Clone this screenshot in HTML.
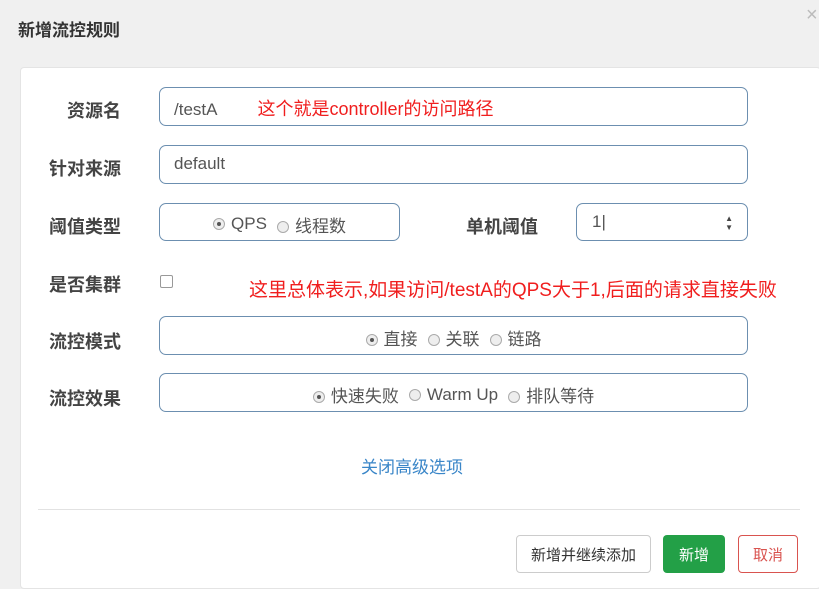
<!DOCTYPE html>
<html><head><meta charset="utf-8"><style>
body{margin:0;width:819px;height:580px;background:#f0f0f0;font-family:"Liberation Sans","Noto Sans CJK SC",sans-serif;position:relative;overflow:hidden}
.a{position:absolute}
.title{left:18px;top:16px;font-size:17px;font-weight:bold;color:#333}
.x{left:806px;top:4px;font-size:20px;color:#bbb}
.panel{left:20px;top:67px;width:799px;height:520px;background:#fff;border-radius:4px;border:1px solid #e4e4e4}
.lb{font-size:18px;font-weight:bold;color:#444;text-align:right;width:115px;left:6px}
.in{border:1.5px solid #6c8fb0;border-radius:7px;background:#fff;box-sizing:border-box;font-size:17px;color:#555}
.red{color:#f01e1e;font-size:18px}
.r{display:inline-block;width:12px;height:12px;border-radius:50%;border:1px solid #aaa;background:#eee;vertical-align:-1px;margin-right:6px;box-sizing:border-box;position:relative}
.r.on::after{content:"";position:absolute;left:3px;top:3px;width:4px;height:4px;border-radius:50%;background:#555}
.grp{display:flex;align-items:center;justify-content:center;font-size:17px;color:#555;padding-top:4px}
.grp span{margin:0 5px}
.btn{border-radius:4px;font-size:15px;box-sizing:border-box;display:flex;align-items:center;justify-content:center}
</style></head><body>
<div class="a title">新增流控规则</div>
<div class="a x">×</div>
<div class="a panel"></div>

<div class="a lb" style="top:97px">资源名</div>
<div class="a in" style="left:159px;top:87px;width:589px;height:39px;padding:7px 0 0 14px">/testA<span class="red" style="margin-left:40px">这个就是controller的访问路径</span></div>

<div class="a lb" style="top:155px">针对来源</div>
<div class="a in" style="left:159px;top:145px;width:589px;height:39px;padding:8px 0 0 14px">default</div>

<div class="a lb" style="top:213px">阈值类型</div>
<div class="a in grp" style="left:159px;top:203px;width:241px;height:38px"><span><i class="r on"></i>QPS</span><span><i class="r"></i>线程数</span></div>
<div class="a lb" style="top:213px;left:423px">单机阈值</div>
<div class="a in" style="left:576px;top:203px;width:172px;height:38px;padding:8px 0 0 15px">1|<span class="a" style="right:14px;top:10px;font-size:8px;line-height:9px;color:#444">▲<br>▼</span></div>

<div class="a lb" style="top:271px">是否集群</div>
<div class="a" style="left:160px;top:275px;width:13px;height:13px;border:1px solid #999;border-radius:2px;box-sizing:border-box;background:#fff"></div>
<div class="a red" style="left:249px;top:275px;font-size:19px;white-space:nowrap">这里总体表示,如果访问/testA的QPS大于1,后面的请求直接失败</div>

<div class="a lb" style="top:328px">流控模式</div>
<div class="a in grp" style="left:159px;top:316px;width:589px;height:39px"><span><i class="r on"></i>直接</span><span><i class="r"></i>关联</span><span><i class="r"></i>链路</span></div>

<div class="a lb" style="top:385px">流控效果</div>
<div class="a in grp" style="left:159px;top:373px;width:589px;height:39px"><span><i class="r on"></i>快速失败</span><span><i class="r"></i>Warm Up</span><span><i class="r"></i>排队等待</span></div>

<div class="a" style="left:361px;top:453px;font-size:17px;color:#3a86c8">关闭高级选项</div>
<div class="a" style="left:38px;top:509px;width:762px;height:1px;background:#e2e2e2"></div>

<div class="a btn" style="left:516px;top:535px;width:135px;height:38px;border:1px solid #ccc;color:#333;background:#fff">新增并继续添加</div>
<div class="a btn" style="left:663px;top:535px;width:62px;height:38px;background:#23a047;color:#fff">新增</div>
<div class="a btn" style="left:738px;top:535px;width:60px;height:38px;border:1px solid #d9534f;color:#d9534f;background:#fff">取消</div>
</body></html>
